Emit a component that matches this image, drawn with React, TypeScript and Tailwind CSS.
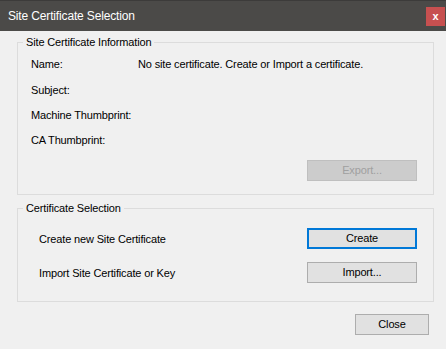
import React from "react";

const font = { fontFamily: '"Segoe UI", "Liberation Sans", Arial, sans-serif' };

function WinButton({ label, width, disabled, focused }: { label: string; width: string; disabled?: boolean; focused?: boolean }) {
  const base = "flex h-[21px] items-center justify-center leading-none";
  if (disabled) {
    return <div className={`${base} ${width} border border-[#bfbfbf] bg-[#cccccc] text-[#a0a0a0]`}>{label}</div>;
  }
  if (focused) {
    return <div className={`${base} ${width} border-2 border-[#0078d7] bg-[#e1e1e1] text-black`}>{label}</div>;
  }
  return <div className={`${base} ${width} border border-[#adadad] bg-[#e1e1e1] text-black`}>{label}</div>;
}

export default function App() {
  const info = [
    { label: "Name:", value: "No site certificate. Create or Import a certificate." },
    { label: "Subject:", value: "" },
    { label: "Machine Thumbprint:", value: "" },
    { label: "CA Thumbprint:", value: "" },
  ];

  return (
    <div className="flex h-[349px] w-[446px] flex-col bg-[#f0f0f0] text-[11px] tracking-[-0.15px] text-black" style={font}>
      {/* title bar */}
      <div className="flex h-[31px] shrink-0 items-center justify-between border-t border-[#3c3b3a] bg-[#4b4a48] pl-[8px] pr-[1px]">
        <span className="text-[12px] tracking-[-0.15px] text-white">Site Certificate Selection</span>
        <div className="flex h-[19px] w-[19px] items-center justify-center bg-[#c75050] text-[11px] font-bold leading-none text-white">x</div>
      </div>

      <div className="flex flex-col pl-[17px] pr-[12px] pt-[3px]">
        <fieldset className="m-0 border border-[#dcdcdc] p-0">
          <legend className="ml-[5px] h-[16px] px-[3px] leading-[16px]">Site Certificate Information</legend>
          <div className="flex flex-col pl-[13px] pt-[2px]">
            {info.map((row) => (
              <div key={row.label} className="flex h-[25.33px] items-center">
                <span className="w-[107px] shrink-0">{row.label}</span>
                <span>{row.value}</span>
              </div>
            ))}
          </div>
          <div className="mb-[13px] mr-[16px] mt-[7px] flex justify-end">
            <WinButton label="Export..." width="w-[110px]" disabled />
          </div>
        </fieldset>

        <fieldset className="m-0 mt-[5px] border border-[#dcdcdc] p-0">
          <legend className="ml-[5px] h-[16px] px-[3px] leading-[16px]">Certificate Selection</legend>
          <div className="flex flex-col gap-[13px] pb-[18px] pl-[21px] pr-[16px] pt-[12px]">
            <div className="flex items-center justify-between">
              <span>Create new Site Certificate</span>
              <WinButton label="Create" width="w-[110px]" focused />
            </div>
            <div className="flex items-center justify-between">
              <span>Import Site Certificate or Key</span>
              <WinButton label="Import..." width="w-[110px]" />
            </div>
          </div>
        </fieldset>

        <div className="mt-[12px] flex justify-end pr-[5px]">
          <WinButton label="Close" width="w-[74px]" />
        </div>
      </div>
    </div>
  );
}
